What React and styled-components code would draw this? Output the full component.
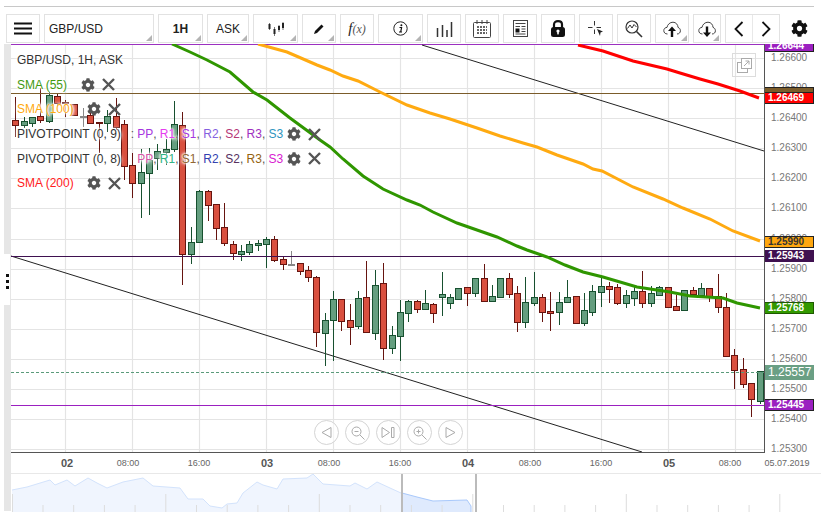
import React from 'react'
import styled, { createGlobalStyle } from 'styled-components'
import { FaCog } from 'react-icons/fa'

const GlobalStyle = createGlobalStyle`
  html, body {
    margin: 0;
    padding: 0;
    background: #fff;
    font-family: "Liberation Sans", Arial, sans-serif;
    overflow: hidden;
  }
`

const Page = styled.div`
  width: 821px;
  height: 515px;
  padding: 6px 0 0 4px;
  box-sizing: border-box;
  overflow: hidden;
`

const TopRule = styled.div`
  width: 810px;
  height: 1px;
  background: #c8c8c8;
`

const Toolbar = styled.div`
  display: flex;
  align-items: stretch;
  gap: 4px;
  height: 29px;
  margin: 7px 0 1px 2px;
`

const ToolButton = styled.div`
  position: relative;
  box-sizing: border-box;
  width: ${p => p.$w}px;
  height: 29px;
  border: 1px solid #e2e2e2;
  display: flex;
  align-items: center;
  justify-content: ${p => (p.$left ? 'flex-start' : 'center')};
  padding-left: ${p => (p.$left ? 4 : 0)}px;
  font-size: 12px;
  font-weight: ${p => (p.$bold ? 700 : 400)};
  color: #222;

  &::after {
    content: '';
    display: ${p => (p.$menu ? 'block' : 'none')};
    position: absolute;
    right: 1px;
    bottom: 1px;
    border-style: solid;
    border-width: 0 0 6px 6px;
    border-color: transparent transparent #b4b4b4 transparent;
  }
`

const PairedButton = styled(ToolButton)`
  padding: 0;
`

const PairHalf = styled.div`
  flex: 1;
  height: 100%;
  display: flex;
  align-items: center;
  justify-content: center;

  & + & {
    border-left: 1px solid #e8e8e8;
  }
`

const GearSlot = styled.div`
  width: 32px;
  display: flex;
  align-items: center;
  justify-content: center;
  margin-left: -1px;
`

const FxLabel = styled.span`
  font-family: "Liberation Serif", serif;
  font-style: italic;
  font-size: 15px;
  color: #222;

  i {
    font-size: 12px;
    color: #555;
  }
`

const Main = styled.div`
  display: flex;
  margin-top: 1px;
`

const Sidebar = styled.div`
  width: 7px;
  display: flex;
  flex-direction: column;
`

const SideBlock = styled.div`
  height: ${p => p.$h}px;
  background: #e6e6e6;
`

const SideGrip = styled.div`
  height: 51px;
  box-sizing: border-box;
  border-right: 1px solid #e6e6e6;
  padding: 20px 0 0 2px;
  display: flex;
  flex-direction: column;
  gap: 3px;

  span {
    display: block;
    width: 3px;
    height: 3px;
    background: #111;
  }
`

const ChartColumn = styled.div`
  width: 810px;
`

const ChartRow = styled.div`
  position: relative;
  display: flex;
  height: 409px;
`

const Plot = styled.div`
  position: relative;
  width: 753px;
  height: 409px;
  box-sizing: border-box;
  border-bottom: 1px solid #555;
  overflow: hidden;

  svg {
    display: block;
  }
`

const PriceAxis = styled.div`
  position: relative;
  width: 57px;
  height: 409px;
  overflow: hidden;
  border-left: 1px solid #555;
  box-sizing: border-box;
`

const PriceTick = styled.div`
  position: absolute;
  left: 6px;
  font-size: 10px;
  line-height: 12px;
  color: #777;
`

const PriceTag = styled.div`
  position: absolute;
  left: -2px;
  width: 51px;
  box-sizing: border-box;
  height: ${p => (p.$big ? 15 : 12)}px;
  line-height: ${p => (p.$big ? 15 : 10)}px;
  padding-left: ${p => (p.$big ? 5 : 4)}px;
  font-size: ${p => (p.$big ? 12 : 10)}px;
  font-weight: ${p => (p.$big ? 400 : 700)};
  color: ${p => p.$ink || '#fff'};
  background: ${p => p.$bg};
  border: ${p => (p.$big ? 'none' : `1px solid ${p.$edge || '#222'}`)};
`

const Legend = styled.div`
  position: absolute;
  left: 6px;
  top: 4px;
  display: flex;
  flex-direction: column;
  font-size: 12px;
`

const LegendRow = styled.div`
  display: flex;
  align-items: center;
  height: 24.6px;
  white-space: pre;
  color: ${p => p.$color || '#333'};
  text-shadow: 0 0 2px #fff, 0 0 2px #fff, 0 0 3px #fff, 0 0 4px #fff, 0 0 5px #fff;
`

const Colon = styled.span`
  margin: 0 3px 0 10px;
  color: ${p => (p.$hidden ? 'transparent' : '#555')};
  text-shadow: none;
`

const PivotName = styled.span`
  color: ${p => p.$color};
`

const Comma = styled.span`
  color: #555;
`

const LegendTools = styled.div`
  display: flex;
  align-items: center;
  gap: 7px;
  margin-left: ${p => p.$gap}px;
  color: #555;
`

const ExpandBox = styled.div`
  position: absolute;
  left: 721px;
  top: 9px;
  width: 24px;
  height: 24px;
  box-sizing: border-box;
  border: 1px solid #dcdcdc;
  display: flex;
  align-items: center;
  justify-content: center;
`

const NavControls = styled.div`
  position: absolute;
  left: 303px;
  top: 376px;
  display: flex;
  gap: 6px;
`

const NavButton = styled.div`
  width: 25px;
  height: 25px;
  box-sizing: border-box;
  border: 1px solid #d4d4d4;
  border-radius: 50%;
  background: rgba(255, 255, 255, 0.6);
  display: flex;
  align-items: center;
  justify-content: center;
`

const TimeAxis = styled.div`
  position: relative;
  height: 20px;
  border-bottom: 1px solid #e8e8e8;
`

const TimeLabel = styled.span`
  position: absolute;
  top: 3px;
  transform: translateX(-50%);
  line-height: 14px;
  font-size: ${p => (p.$day ? 11 : 9)}px;
  font-weight: ${p => (p.$day ? 700 : 400)};
  color: ${p => (p.$day ? '#555' : '#666')};
  white-space: nowrap;
`

const Navigator = styled.svg`
  display: block;
`

/* [x, high, body top, body bottom, low, colour] in page pixels */
const candles = [
  [15, 97, 120, 125, 137, 'r'], [24, 117, 121, 125, 128, 'g'], [32, 117, 117, 123, 127, 'g'], [40, 88, 116, 120, 123, 'r'],
  [49, 92, 95, 121, 123, 'g'], [57, 94, 96, 103, 107, 'r'], [65, 100, 102, 103, 117, 'r'], [74, 104, 104, 115, 116, 'r'],
  [83, 108, 116, 116, 127, 'n'], [90, 108, 115, 123, 123, 'r'], [99, 122, 122, 123, 153, 'r'], [107, 110, 116, 123, 132, 'g'],
  [116, 98, 116, 127, 130, 'r'], [124, 120, 124, 166, 180, 'r'], [132, 153, 165, 183, 198, 'r'], [141, 149, 172, 183, 218, 'g'],
  [149, 148, 160, 173, 215, 'g'], [157, 144, 151, 158, 170, 'g'], [166, 139, 149, 152, 165, 'g'], [174, 101, 124, 149, 152, 'g'],
  [182, 112, 125, 254, 285, 'r'], [191, 227, 242, 254, 264, 'g'], [199, 190, 191, 242, 243, 'g'], [208, 190, 191, 205, 221, 'r'],
  [216, 204, 204, 228, 240, 'r'], [224, 203, 227, 243, 246, 'r'], [233, 241, 244, 253, 260, 'r'], [241, 245, 251, 254, 261, 'g'],
  [249, 241, 244, 252, 255, 'g'], [258, 240, 243, 245, 251, 'g'], [266, 237, 239, 244, 268, 'g'], [274, 236, 239, 260, 262, 'r'],
  [283, 257, 259, 264, 270, 'r'], [291, 251, 264, 264, 266, 'n'], [300, 263, 263, 271, 275, 'r'], [308, 266, 270, 277, 282, 'r'],
  [316, 276, 277, 332, 347, 'r'], [325, 313, 320, 333, 366, 'g'], [333, 291, 299, 320, 361, 'g'], [341, 299, 299, 321, 331, 'r'],
  [350, 304, 320, 327, 345, 'r'], [358, 291, 298, 326, 329, 'g'], [366, 261, 297, 332, 332, 'r'], [375, 270, 285, 333, 340, 'g'],
  [383, 263, 283, 348, 360, 'r'], [392, 326, 335, 348, 354, 'g'], [400, 300, 312, 336, 361, 'g'], [408, 300, 301, 313, 322, 'g'],
  [417, 300, 301, 309, 313, 'r'], [425, 290, 303, 309, 309, 'g'], [433, 303, 304, 313, 323, 'r'], [442, 272, 294, 297, 316, 'g'],
  [450, 294, 297, 303, 309, 'g'], [458, 288, 288, 299, 300, 'g'], [467, 287, 287, 293, 306, 'r'], [475, 278, 278, 293, 297, 'g'],
  [484, 264, 278, 301, 301, 'r'], [492, 285, 296, 301, 301, 'g'], [500, 278, 278, 297, 297, 'g'], [509, 273, 278, 294, 298, 'r'],
  [517, 286, 293, 322, 332, 'r'], [525, 277, 302, 322, 328, 'g'], [534, 272, 297, 303, 306, 'g'], [542, 294, 297, 312, 322, 'r'],
  [550, 292, 311, 313, 331, 'r'], [559, 292, 302, 312, 325, 'g'], [567, 280, 297, 302, 303, 'g'], [576, 296, 296, 323, 324, 'r'],
  [584, 293, 310, 323, 326, 'g'], [592, 285, 291, 312, 316, 'g'], [601, 277, 286, 292, 307, 'g'], [609, 282, 286, 289, 303, 'r'],
  [617, 284, 287, 303, 305, 'r'], [626, 290, 295, 303, 308, 'g'], [634, 287, 291, 298, 306, 'g'], [642, 271, 291, 303, 308, 'r'],
  [651, 286, 293, 303, 307, 'g'], [659, 286, 287, 295, 295, 'g'], [668, 287, 287, 307, 308, 'r'], [676, 295, 306, 310, 311, 'r'],
  [684, 290, 290, 310, 311, 'g'], [693, 287, 290, 294, 297, 'r'], [701, 283, 288, 295, 296, 'g'], [709, 288, 288, 297, 302, 'r'],
  [718, 274, 296, 307, 313, 'r'], [726, 293, 307, 356, 357, 'r'], [734, 349, 355, 370, 389, 'r'], [743, 358, 369, 384, 388, 'r'],
  [751, 383, 383, 399, 417, 'r'], [760, 371, 371, 401, 404, 'g'],
]

const candleInk = {
  r: { fill: '#d9503f', line: '#66140f' },
  g: { fill: '#659e7f', line: '#17502f' },
  n: { fill: '#888', line: '#888' },
}

const sma55 = '172,44 190,52 207,60 230,72 253,92 267,100 290,118 320,140 330,147 343,159 363,176 383,189 407,200 420,205 433,212 457,223 477,230 497,237 517,246 527,250 547,257 565,265 583,272 603,277 637,287 670,292 690,296 723,298 737,303 760,308'
const sma100 = '258,44 287,52 317,65 330,70 343,76 358,81 380,92 407,105 430,113 450,119 477,128 500,136 523,143 537,147 557,155 583,164 593,169 602,171 633,187 663,199 683,208 710,219 733,231 760,241'
const sma200 = '578,45 603,51 633,61 667,69 680,73 700,79 718,84 740,91 759,98'

const gridX = [65, 132, 199, 266, 333, 400, 467, 534, 601, 668, 735]
const gridY = [58, 88, 118, 148, 178, 208, 239, 269, 299, 329, 359, 389, 419, 449]
const priceTicks = ['1.26600', '1.26500', '1.26400', '1.26300', '1.26200', '1.26100', '1.26000', '1.25900', '1.25800', '1.25700', '1.25600', '1.25500', '1.25400', '1.25300']

const tags = [
  { label: '1.26644', y: 40, bg: '#9b20c0' },
  { label: '', y: 87, bg: '#7b5c2a' },
  { label: '1.26469', y: 92, bg: '#ff0000' },
  { label: '1.25990', y: 236, bg: '#ffa70f', ink: '#333' },
  { label: '1.25943', y: 250, bg: '#3f1150', edge: '#3f1150' },
  { label: '1.25768', y: 302, bg: '#339900', edge: '#1e5a00' },
  { label: '1.25557', y: 365, bg: '#6a9f84', big: true },
  { label: '1.25445', y: 399, bg: '#9b20c0' },
]

const timeLabels = [
  { x: 56, text: '02', day: true }, { x: 117, text: '08:00' }, { x: 188, text: '16:00' },
  { x: 256, text: '03', day: true }, { x: 318, text: '08:00' }, { x: 389, text: '16:00' },
  { x: 457, text: '04', day: true }, { x: 519, text: '08:00' }, { x: 590, text: '16:00' },
  { x: 658, text: '05', day: true }, { x: 719, text: '08:00' }, { x: 776, text: '05.07.2019' },
]

const navLeft = '12,489 27,486 50,479 55,484 67,479 75,485 88,477 97,482 107,487 123,481 143,477 153,485 180,487 188,498 203,498 210,505 222,507 227,503 237,502 243,492 257,481 263,484 277,488 283,478 307,477 313,473 323,483 350,485 355,482 367,488 377,481 390,487 401,492'
const navRight = '402,492 417,496 433,500 467,499 471,505 471,511'
const navTicks = Array.from({ length: 25 }, (_, i) => ({ x: 43 + 30.7 * i, tall: i % 5 === 4 }))

const pivotRows = [
  {
    name: 'PIVOTPOINT (0, 9)',
    colon: true,
    items: [['PP', '#a535e0'], ['R1', '#e63cf0'], ['S1', '#a535e0'], ['R2', '#8460e0'], ['S2', '#b53575'], ['R3', '#a030c0'], ['S3', '#2f95c0']],
  },
  {
    name: 'PIVOTPOINT (0, 8)',
    colon: false,
    items: [['PP', '#d555a5'], ['R1', '#2fb585'], ['S1', '#8f6430'], ['R2', '#3040b0'], ['S2', '#55305f'], ['R3', '#95620f'], ['S3', '#d820d0']],
  },
]

const Close = () => (
  <svg width="13" height="13" viewBox="0 0 13 13">
    <path d="M1 1 L12 12 M12 1 L1 12" stroke="#555" strokeWidth="2.4" fill="none" />
  </svg>
)

const RowTools = ({ gap }) => (
  <LegendTools $gap={gap}>
    <FaCog size={14} />
    <Close />
  </LegendTools>
)

const Chart = () => (
  <svg width="753" height="408" viewBox="11 44 753 408">
    {gridX.map(x => <line key={x} x1={x + 0.5} x2={x + 0.5} y1="44" y2="452" stroke="#e4e4e4" strokeWidth="1.2" />)}
    {gridY.map(y => <line key={y} x1="11" x2="764" y1={y + 0.5} y2={y + 0.5} stroke="#e4e4e4" strokeWidth="1.2" />)}
    <line x1="11" x2="764" y1="44.5" y2="44.5" stroke="#9b30c0" />
    <line x1="422" y1="45" x2="764" y2="151" stroke="#222" />
    <line x1="11" y1="256" x2="642" y2="452" stroke="#222" />
    {candles.map(([x, high, top, bottom, low, kind]) => {
      const ink = candleInk[kind]
      return (
        <g key={x}>
          <line x1={x + 0.5} x2={x + 0.5} y1={high} y2={low} stroke={ink.line} />
          <rect x={x - 2.5} y={top + 0.5} width="6" height={Math.max(bottom - top, 1)} fill={ink.fill} stroke={ink.line} />
        </g>
      )
    })}
    <line x1="11" x2="764" y1="93.5" y2="93.5" stroke="#7b5c2a" />
    <line x1="11" x2="764" y1="256.5" y2="256.5" stroke="#3f1150" />
    <line x1="11" x2="764" y1="405.5" y2="405.5" stroke="#9b20c0" />
    <line x1="11" x2="764" y1="372.5" y2="372.5" stroke="#5a9a7a" strokeDasharray="3 2" />
    <polyline points={sma55} fill="none" stroke="#2f9600" strokeWidth="3" />
    <polyline points={sma100} fill="none" stroke="#ffaa11" strokeWidth="3" />
    <polyline points={sma200} fill="none" stroke="#ff0000" strokeWidth="3" />
  </svg>
)

const Hamburger = () => (
  <svg width="18" height="13" viewBox="0 0 18 13">
    <path d="M0 1.5 H18 M0 6.5 H18 M0 11.5 H18" stroke="#111" strokeWidth="2" />
  </svg>
)

const CandlesIcon = () => (
  <svg width="16" height="16" viewBox="0 0 16 16">
    <path d="M1.5 2 V9 M6.5 6 V15 M11 4 V11 M15 1 V9" stroke="#777" />
    <path d="M0.5 3 h2 v5 h-2 z M5.5 8 h2 v5 h-2 z M10 5 h2 v4 h-2 z M14 2 h2 v5 h-2 z" fill="#222" />
  </svg>
)

const PenIcon = () => (
  <svg width="12" height="12" viewBox="0 0 12 12">
    <path d="M1 11 L2 8 L8.5 1.5 L10.5 3.5 L4 10 Z" fill="#111" />
  </svg>
)

const InfoIcon = () => (
  <svg width="15" height="15" viewBox="0 0 15 15">
    <circle cx="7.5" cy="7.5" r="6.7" fill="none" stroke="#222" />
    <path d="M6.5 6.5 H8.6 L7.7 11 H9 M6 11 H8" stroke="#111" strokeWidth="1.2" fill="none" />
    <circle cx="8.4" cy="4.2" r="1" fill="#111" />
  </svg>
)

const BarsIcon = () => (
  <svg width="17" height="16" viewBox="0 0 17 16">
    <path d="M1.5 16 V7 M6.5 16 V4 M11 16 V9 M15.5 16 V1" stroke="#333" strokeWidth="1.5" />
  </svg>
)

const CalendarIcon = () => (
  <svg width="18" height="18" viewBox="0 0 18 18">
    <rect x="0.5" y="2.5" width="17" height="15" rx="1" fill="none" stroke="#444" />
    <path d="M4 0 V4 M9 0 V4 M14 0 V4" stroke="#444" />
    <path d="M4 7 h10 M4 10 h10 M4 13 h10" stroke="#333" strokeWidth="1.6" strokeDasharray="2 1" />
  </svg>
)

const NewsIcon = () => (
  <svg width="15" height="17" viewBox="0 0 15 17">
    <rect x="0.5" y="0.5" width="14" height="16" fill="none" stroke="#444" />
    <path d="M2.5 3.5 H12.5 M8.5 6.5 H12.5 M8.5 9 H12.5 M8.5 11.5 H12.5 M2.5 14 H12.5 M2.5 6.5 H7" stroke="#444" />
    <rect x="2.5" y="8.5" width="4" height="4" fill="#111" />
  </svg>
)

const LockIcon = () => (
  <svg width="14" height="17" viewBox="0 0 14 17">
    <path d="M3 8 V4.5 C3 2.5 4.6 1.2 7 1.2 C9.4 1.2 11 2.5 11 4.5 V8" fill="none" stroke="#111" strokeWidth="2.2" />
    <rect x="0" y="7" width="14" height="10" rx="2.5" fill="#111" />
    <circle cx="7" cy="11" r="1.6" fill="#fff" />
    <rect x="6.2" y="11" width="1.6" height="3.4" fill="#fff" />
  </svg>
)

const CrossIcon = () => (
  <svg width="16" height="16" viewBox="0 0 16 16">
    <path d="M0 6.5 H4.5 M8.5 6.5 H13 M6.5 0 V4.5 M6.5 8.5 V13" stroke="#333" />
    <path d="M9 8 L15 10.5 L12.5 11.5 L12 15 Z" fill="#222" />
  </svg>
)

const ZoomChartIcon = () => (
  <svg width="18" height="18" viewBox="0 0 18 18">
    <circle cx="7" cy="7" r="6" fill="none" stroke="#333" strokeWidth="1.2" />
    <path d="M2.5 8.5 L5 5 L7 8 L9 4.5 L11.5 7" fill="none" stroke="#333" />
    <path d="M11.5 11.5 L17 17" stroke="#333" strokeWidth="1.6" />
  </svg>
)

const cloudPath = 'M4.5 13 C2 13 0.8 11.4 0.8 9.6 C0.8 7.6 2.4 6.4 4 6.4 C4.5 3.4 7 1.2 10 1.2 C13 1.2 15 3.8 15 6.4 C16.6 6.9 17.4 8.3 17.4 9.8 C17.4 11.5 16.2 13 14 13'

const CloudUp = () => (
  <svg width="18" height="16" viewBox="0 0 18 16">
    <path d={cloudPath} fill="none" stroke="#444" />
    <path d="M9 5.5 L13 10 H10.2 V16 H7.8 V10 H5 Z" fill="#111" />
  </svg>
)

const CloudDown = () => (
  <svg width="18" height="16" viewBox="0 0 18 16">
    <path d={cloudPath} fill="none" stroke="#444" />
    <path d="M9 16 L13 11.5 H10.2 V5.5 H7.8 V11.5 H5 Z" fill="#111" />
  </svg>
)

const Chevron = ({ flip }) => (
  <svg width="10" height="16" viewBox="0 0 10 16">
    <path d={flip ? 'M1.5 1 L8.5 8 L1.5 15' : 'M8.5 1 L1.5 8 L8.5 15'} fill="none" stroke="#111" strokeWidth="1.8" />
  </svg>
)

const ExpandIcon = () => (
  <svg width="15" height="15" viewBox="0 0 15 15">
    <rect x="0.5" y="4.5" width="10" height="10" fill="#fff" stroke="#aaa" />
    <rect x="4.5" y="0.5" width="10" height="10" fill="#fff" stroke="#aaa" />
    <path d="M7 8 L12 3 M8.5 3 H12 V6.5" fill="none" stroke="#aaa" />
  </svg>
)

const navStroke = { fill: 'none', stroke: '#aaa' }

const NavIcon = ({ kind }) => {
  if (kind === 'prev') {
    return <svg width="13" height="13" viewBox="0 0 13 13"><path d="M11 1.5 V11.5 L2 6.5 Z" {...navStroke} /></svg>
  }
  if (kind === 'next') {
    return <svg width="13" height="13" viewBox="0 0 13 13"><path d="M2 1.5 V11.5 L11 6.5 Z" {...navStroke} /></svg>
  }
  if (kind === 'end') {
    return <svg width="15" height="13" viewBox="0 0 15 13"><path d="M1 1.5 V11.5 L8.5 6.5 Z M10.5 1.5 H13 V11.5 H10.5 Z" {...navStroke} /></svg>
  }
  return (
    <svg width="14" height="14" viewBox="0 0 14 14">
      <circle cx="5.5" cy="5.5" r="4.5" {...navStroke} />
      <path d={kind === 'in' ? 'M3.5 5.5 H7.5 M5.5 3.5 V7.5 M9 9 L13.5 13.5' : 'M3.5 5.5 H7.5 M9 9 L13.5 13.5'} {...navStroke} />
    </svg>
  )
}

const App = () => {
  return (
    <Page>
      <GlobalStyle />
      <TopRule />
      <Toolbar>
        <ToolButton $w={34}><Hamburger /></ToolButton>
        <ToolButton $w={110} $left $menu>GBP/USD</ToolButton>
        <ToolButton $w={45} $bold $menu>1H</ToolButton>
        <ToolButton $w={42} $menu>ASK</ToolButton>
        <ToolButton $w={45} $menu><CandlesIcon /></ToolButton>
        <ToolButton $w={34} $menu><PenIcon /></ToolButton>
        <ToolButton $w={34}><FxLabel>f<i>(x)</i></FxLabel></ToolButton>
        <ToolButton $w={45} $menu><InfoIcon /></ToolButton>
        <ToolButton $w={34}><BarsIcon /></ToolButton>
        <ToolButton $w={34}><CalendarIcon /></ToolButton>
        <ToolButton $w={34}><NewsIcon /></ToolButton>
        <ToolButton $w={34}><LockIcon /></ToolButton>
        <ToolButton $w={34}><CrossIcon /></ToolButton>
        <ToolButton $w={34}><ZoomChartIcon /></ToolButton>
        <ToolButton $w={34} $menu><CloudUp /></ToolButton>
        <ToolButton $w={28} $menu><CloudDown /></ToolButton>
        <PairedButton $w={55}>
          <PairHalf><Chevron /></PairHalf>
          <PairHalf><Chevron flip /></PairHalf>
        </PairedButton>
        <GearSlot><FaCog size={17} color="#111" /></GearSlot>
      </Toolbar>
      <Main>
        <Sidebar>
          <SideBlock $h={210} />
          <SideGrip><span /><span /><span /></SideGrip>
          <SideBlock $h={206} />
        </Sidebar>
        <ChartColumn>
          <ChartRow>
            <Plot>
              <Chart />
              <Legend>
                <LegendRow>GBP/USD, 1H, ASK</LegendRow>
                <LegendRow $color="#3f9a10">SMA (55)<RowTools gap={14} /></LegendRow>
                <LegendRow $color="#ffaa11">SMA (100)<RowTools gap={13} /></LegendRow>
                {pivotRows.map(row => (
                  <LegendRow key={row.name}>
                    {row.name}
                    <Colon $hidden={!row.colon}>:</Colon>
                    {row.items.map(([label, color], i) => (
                      <React.Fragment key={label}>
                        <PivotName $color={color}>{label}</PivotName>
                        {i < row.items.length - 1 && <Comma>, </Comma>}
                      </React.Fragment>
                    ))}
                    <RowTools gap={4} />
                  </LegendRow>
                ))}
                <LegendRow $color="#ff2020">SMA (200)<RowTools gap={13} /></LegendRow>
              </Legend>
              <ExpandBox><ExpandIcon /></ExpandBox>
              <NavControls>
                <NavButton><NavIcon kind="prev" /></NavButton>
                <NavButton><NavIcon kind="out" /></NavButton>
                <NavButton><NavIcon kind="end" /></NavButton>
                <NavButton><NavIcon kind="in" /></NavButton>
                <NavButton><NavIcon kind="next" /></NavButton>
              </NavControls>
            </Plot>
            <PriceAxis>
              {priceTicks.map((text, i) => (
                <PriceTick key={text} style={{ top: gridY[i] - 50 }}>{text}</PriceTick>
              ))}
              {tags.map(tag => (
                <PriceTag
                  key={tag.y}
                  $bg={tag.bg}
                  $ink={tag.ink}
                  $edge={tag.edge}
                  $big={tag.big}
                  style={{ top: tag.y - 44 }}
                >
                  {tag.label}
                </PriceTag>
              ))}
            </PriceAxis>
          </ChartRow>
          <TimeAxis>
            {timeLabels.map(item => (
              <TimeLabel key={item.x} $day={item.day} style={{ left: item.x }}>{item.text}</TimeLabel>
            ))}
          </TimeAxis>
          <Navigator width="810" height="38" viewBox="11 473 810 38">
            <polygon points={`12,511 ${navLeft} 401,511`} fill="#f0f5fe" />
            <polyline points={navLeft} fill="none" stroke="#d3e3fc" />
            <polygon points={`402,511 ${navRight}`} fill="#dfeafd" />
            <polyline points={navRight} fill="none" stroke="#a9c9fb" />
            <line x1="12.5" x2="12.5" y1="493" y2="511" stroke="#ddd" />
            {navTicks.map(t => (
              <line key={t.x} x1={t.x} x2={t.x} y1={t.tall ? 493 : 504} y2="511" stroke="#ddd" />
            ))}
            <rect x="401" y="473" width="2" height="38" fill="#bbb" />
            <rect x="475" y="473" width="2" height="38" fill="#bbb" />
          </Navigator>
        </ChartColumn>
      </Main>
    </Page>
  )
}

export default App
